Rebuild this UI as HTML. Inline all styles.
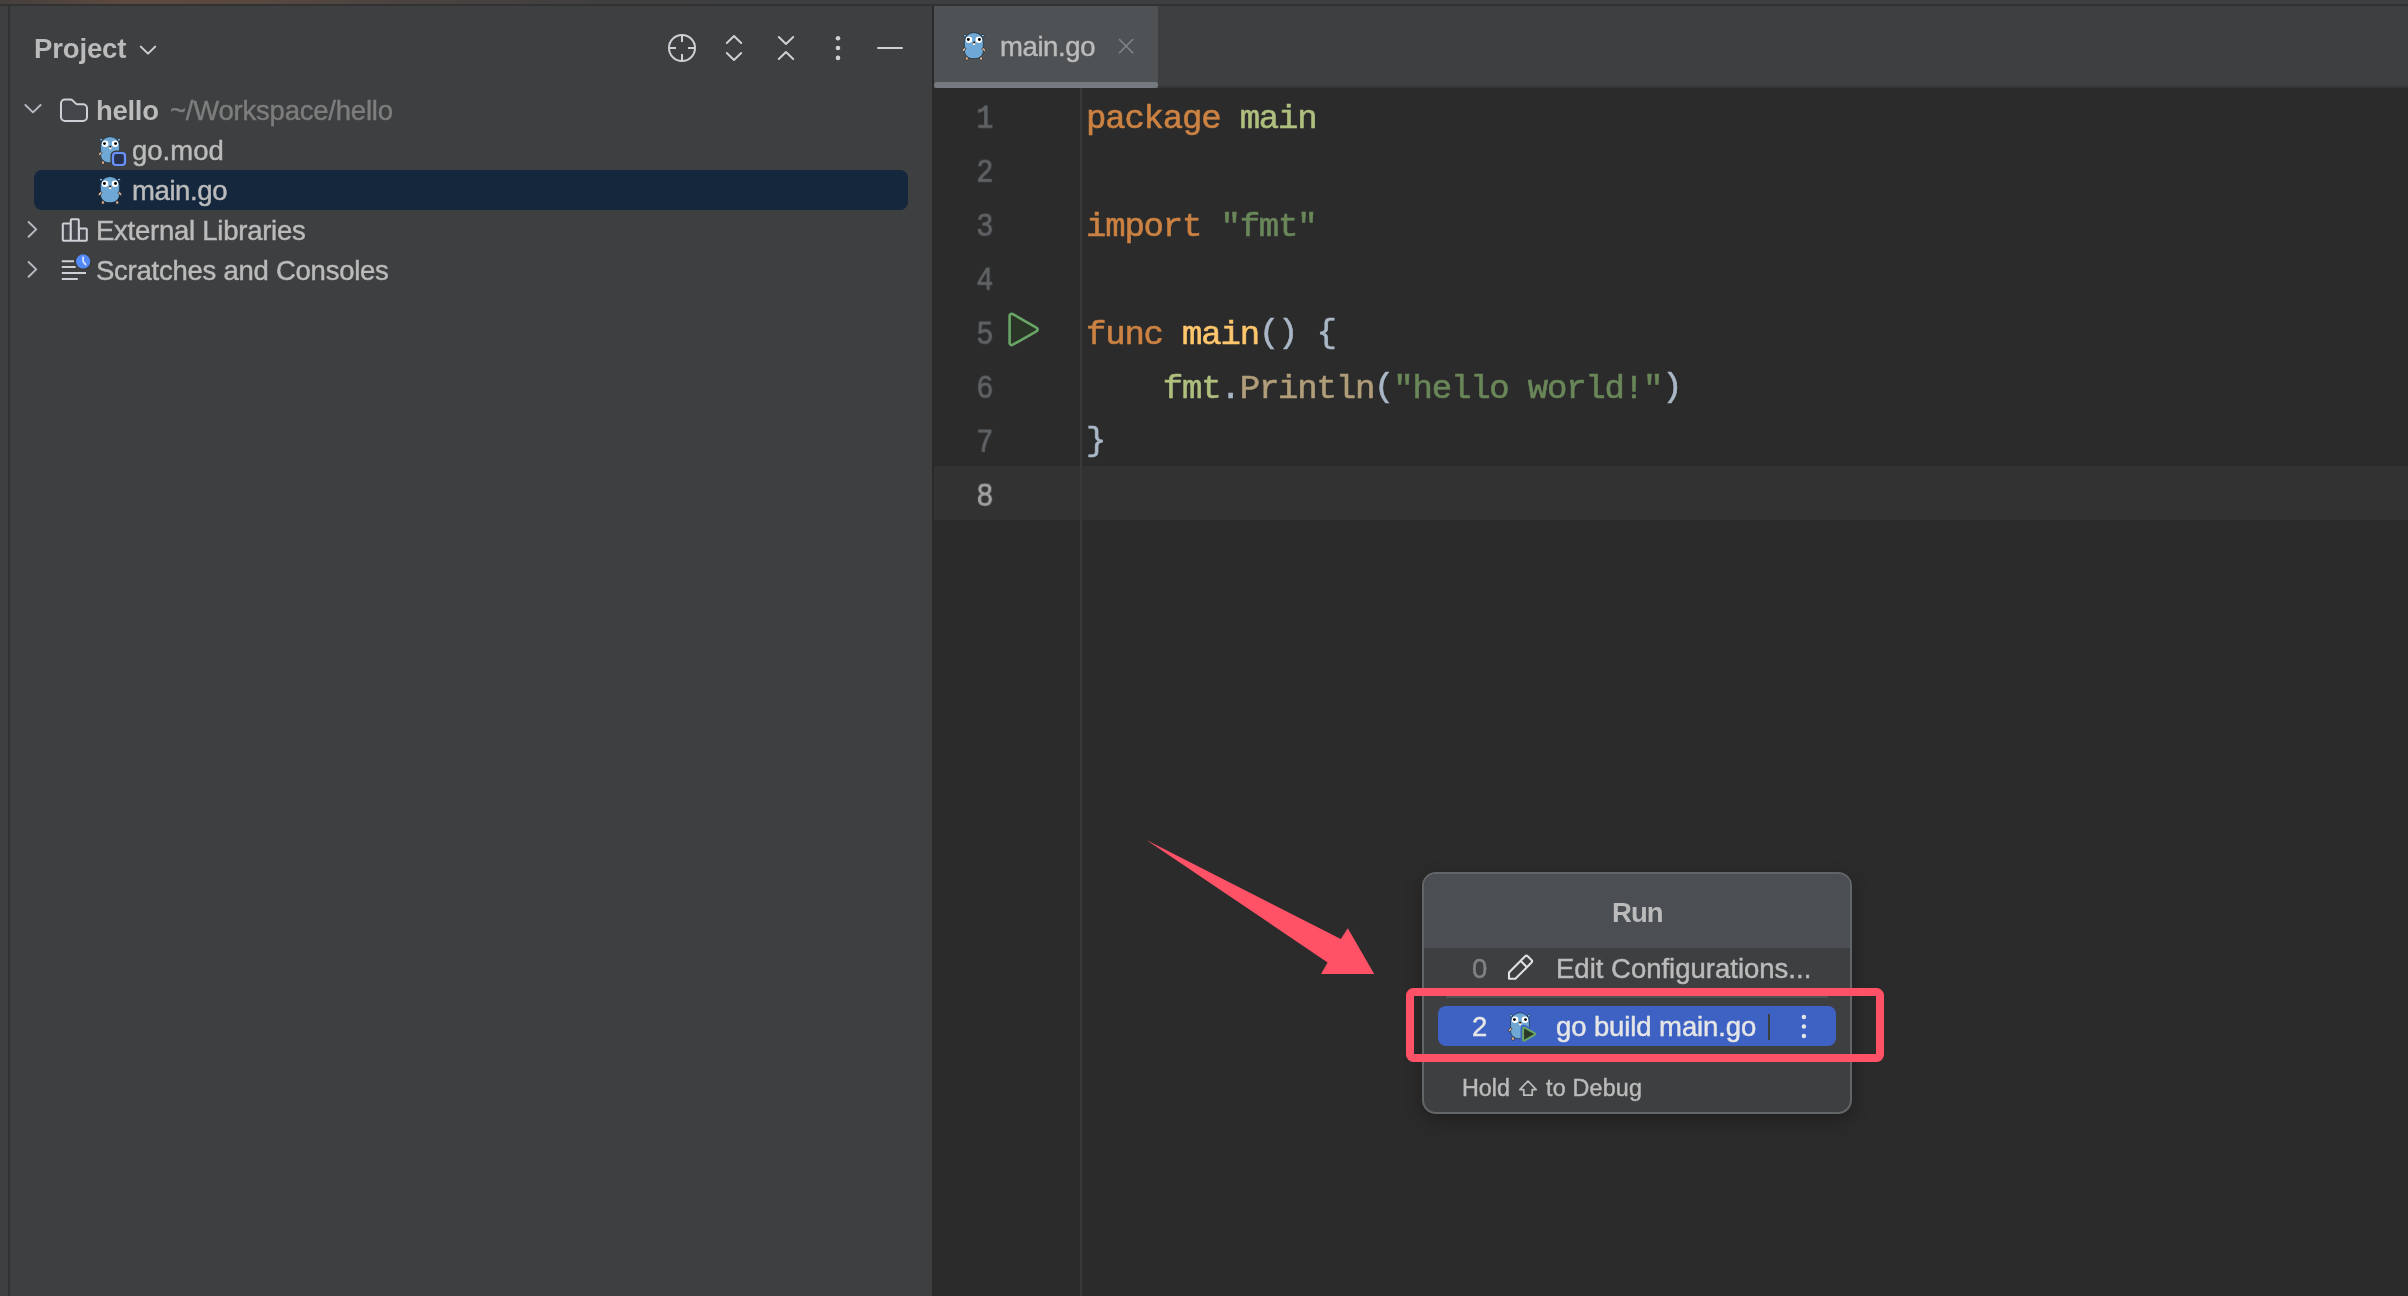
<!DOCTYPE html>
<html>
<head>
<meta charset="utf-8">
<title>GoLand</title>
<style>
*{box-sizing:border-box;margin:0;padding:0}
html,body{width:2408px;height:1296px;overflow:hidden;background:#2b2b2b}
body{position:relative;font-family:"Liberation Sans",sans-serif;color:#bbbbbb}
.abs{position:absolute}
.t{position:absolute;will-change:transform;white-space:pre;line-height:1;font-size:27.5px;color:#bbbbbb}
.t{-webkit-text-stroke:0.45px currentColor}
.b{font-weight:bold;-webkit-text-stroke:0}
.mono{font-family:"Liberation Mono",monospace}
svg{position:absolute;overflow:visible}
/* backgrounds */
#topstrip{left:0;top:0;width:2408px;height:4px;background:linear-gradient(90deg,#453f3d 0px,#5e4a40 130px,#584840 260px,#4a4341 420px,#403f40 600px,#3d3f41 800px,#3d3f41 2408px)}
#hline{left:0;top:4px;width:2408px;height:2px;background:#323232}
#leftstrip{left:0;top:6px;width:8px;height:1290px;background:#3d3f41}
#vline1{left:8px;top:6px;width:2px;height:1290px;background:#323232}
#panel{left:10px;top:6px;width:922px;height:1290px;background:#3d3f41}
#vline2{left:932px;top:6px;width:2px;height:1290px;background:#2a2a2a}
#tabbar{left:934px;top:6px;width:1474px;height:80px;background:#3d3f41}
#tabline{left:934px;top:86px;width:1474px;height:2px;background:#353535}
#tab{left:934px;top:6px;width:224px;height:82px;background:#4e5254}
#tabul{left:934px;top:82px;width:224px;height:6px;background:#747a80;border-radius:3px}
#caretrow{left:934px;top:466px;width:1474px;height:54px;background:#323232}
#gutline{left:1080px;top:88px;width:2px;height:1208px;background:#393939}
#sel{left:34px;top:170px;width:874px;height:40px;background:#15273c;border-radius:8px}
/* code */
.ln{position:absolute;will-change:transform;left:934px;width:60.5px;text-align:right;font-family:"Liberation Mono",monospace;font-size:32px;line-height:54px;height:54px;color:#606366;transform:translateY(1px) scale(0.9,1.04);transform-origin:50.9px 60%;-webkit-text-stroke:0.7px currentColor}
.cl{position:absolute;will-change:transform;left:1085.5px;-webkit-text-stroke:0.6px currentColor;font-family:"Liberation Mono",monospace;font-size:34px;line-height:54px;height:54px;white-space:pre;letter-spacing:-1.2px;color:#a9b7c6}
.pn{position:relative;top:-2px}.kw{color:#cc8242}.pk{color:#afbf7e}.st{color:#6a8759}.fn{color:#ffc66d}.fc{color:#b09d79}
</style>
</head>
<body>
<div class="abs" id="topstrip"></div>
<div class="abs" id="hline"></div>
<div class="abs" id="leftstrip"></div>
<div class="abs" id="vline1"></div>
<div class="abs" id="panel"></div>
<div class="abs" id="vline2"></div>
<div class="abs" id="tabbar"></div>
<div class="abs" id="tabline"></div>
<div class="abs" id="tab"></div>
<div class="abs" id="tabul"></div>
<div class="abs" id="caretrow"></div>
<div class="abs" id="gutline"></div>
<div class="abs" id="sel"></div>

<!-- PROJECT HEADER -->
<div class="t b" id="tProject" style="left:34px;top:35px;font-size:27.5px;letter-spacing:-0.15px">Project</div>

<!-- TREE -->
<div class="t b" id="tHello" style="left:96px;top:96.5px;letter-spacing:-0.3px">hello</div>
<div class="t" id="tPath" style="left:170px;top:96.5px;color:#7d7d7d;letter-spacing:-0.22px">~/Workspace/hello</div>
<div class="t" id="tGomod" style="left:132px;top:136.5px">go.mod</div>
<div class="t" id="tMaingo" style="left:132px;top:176.5px;letter-spacing:-0.4px">main.go</div>
<div class="t" id="tExt" style="left:95.8px;top:216.5px;letter-spacing:-0.25px">External Libraries</div>
<div class="t" id="tScr" style="left:96px;top:256.5px;letter-spacing:-0.25px">Scratches and Consoles</div>

<!-- TAB -->
<div class="t" id="tTab" style="left:1000px;top:33px;letter-spacing:-0.4px">main.go</div>

<!-- CODE -->
<div class="ln" style="top:92px">1</div>
<div class="ln" style="top:146px">2</div>
<div class="ln" style="top:200px">3</div>
<div class="ln" style="top:254px">4</div>
<div class="ln" style="top:308px">5</div>
<div class="ln" style="top:362px">6</div>
<div class="ln" style="top:416px">7</div>
<div class="ln" style="top:470px;color:#a4a3a3">8</div>

<div class="cl" style="top:92px"><span class="kw">package</span> <span class="pk">main</span></div>
<div class="cl" style="top:200px"><span class="kw">import</span> <span class="st">"fmt"</span></div>
<div class="cl" style="top:308px"><span class="kw">func</span> <span class="fn">main</span><span class="pn">()</span> <span class="pn">{</span></div>
<div class="cl" style="top:362px">    <span class="pk">fmt</span>.<span class="fc">Println</span><span class="pn">(</span><span class="st">"hello world!"</span><span class="pn">)</span></div>
<div class="cl" style="top:416px"><span class="pn">}</span></div>

<!-- POPUP -->
<div class="abs" id="popup" style="left:1422px;top:872px;width:430px;height:242px;border:2px solid #636668;border-radius:14px;background:#3d3f41;overflow:hidden;box-shadow:0 6px 18px rgba(0,0,0,0.28)">
  <div class="abs" id="pophead" style="left:0;top:0;width:426px;height:74px;background:#4b4e53"></div>
</div>
<div class="abs" id="popsep" style="left:1446px;top:996px;width:382px;height:2px;background:#505357"></div>
<div class="abs" id="bluerow" style="left:1438px;top:1006px;width:398px;height:40px;border-radius:8px;background:#3d62c4"></div>
<div class="abs" id="rowsep" style="left:1768px;top:1014px;width:2px;height:26px;background:#3c3f41"></div>
<div class="t b" id="tRun" style="left:1612px;top:899px;letter-spacing:-0.9px">Run</div>
<div class="t" id="tZero" style="left:1472px;top:955px;color:#808285">0</div>
<div class="t" id="tEdit" style="left:1555.5px;top:955px">Edit Configurations...</div>
<div class="t" id="tTwo" style="left:1472px;top:1013px;color:#e6e6e6">2</div>
<div class="t" id="tBuild" style="left:1556px;top:1013px;color:#e6e6e6;letter-spacing:-0.1px">go build main.go</div>
<div class="t" id="tHold" style="left:1462px;top:1077.3px;font-size:23.3px">Hold</div>
<div class="t" id="tDebug" style="left:1545.8px;top:1077.3px;font-size:23.3px;letter-spacing:0.2px">to Debug</div>
<div class="abs" id="redrect" style="left:1406px;top:988px;width:478px;height:74px;border:8px solid #ff5266;border-radius:7.5px"></div>

<!-- ICON LAYER -->
<svg id="icons" width="2408" height="1296" viewBox="0 0 2408 1296" style="left:0;top:0" fill="none">
<defs>
<symbol id="gopher" viewBox="0 0 34 36" overflow="visible">
  <g stroke="#0f1b28" stroke-opacity="0.8" stroke-width="0.7">
    <ellipse cx="7.1" cy="7.6" rx="1.6" ry="1.05" fill="#8fc4ea" transform="rotate(22 7.1 7.6)"/>
    <ellipse cx="24.9" cy="7.6" rx="1.6" ry="1.05" fill="#8fc4ea" transform="rotate(-22 24.9 7.6)"/>
    <path d="M6.5 14.2C6.5 8.9 10.7 4.7 15.95 4.7C21.2 4.7 25.4 8.9 25.4 14.2L25.4 22.6C25.4 27 21.9 30.6 17.4 30.6L14.5 30.6C10 30.6 6.5 27 6.5 22.6Z" fill="#6fa8d4"/>
    <ellipse cx="6.1" cy="21.6" rx="2.3" ry="1.15" fill="#eabf9e" transform="rotate(-45 6.1 21.6)"/>
    <ellipse cx="25.9" cy="21.6" rx="2.3" ry="1.15" fill="#eabf9e" transform="rotate(45 25.9 21.6)"/>
    <ellipse cx="8.9" cy="30.5" rx="1.5" ry="1.7" fill="#e4b491" transform="rotate(-20 8.9 30.5)"/>
    <ellipse cx="23.2" cy="30.5" rx="1.5" ry="1.7" fill="#e4b491" transform="rotate(20 23.2 30.5)"/>
  </g>
  <circle cx="11.1" cy="11.7" r="3.25" fill="#fff"/>
  <circle cx="20.9" cy="11.7" r="3.25" fill="#fff"/>
  <circle cx="10.4" cy="11.5" r="1.45" fill="#000"/>
  <circle cx="21.5" cy="11.5" r="1.45" fill="#000"/>
  <ellipse cx="16.2" cy="15.2" rx="1.5" ry="1" fill="#e3b08d"/>
  <ellipse cx="16.2" cy="14.3" rx="1" ry="0.75" fill="#000"/>
  <rect x="15.2" y="15.9" width="2" height="1.2" fill="#fff"/>
</symbol>
</defs>

<!-- Project header chevron -->
<path d="M140.8 46.6L148 53.6L155.2 46.6" stroke="#ced0d6" stroke-width="2" stroke-linecap="round" stroke-linejoin="round"/>

<!-- toolbar: locate -->
<g stroke="#ced0d6" stroke-width="2" stroke-linecap="butt">
  <circle cx="682" cy="48" r="13"/>
  <path d="M682 35V42M682 54V61M669 48H676M688 48H695"/>
</g>
<!-- expand all -->
<g stroke="#ced0d6" stroke-width="2" stroke-linecap="round" stroke-linejoin="round">
  <path d="M726.8 43L734 36L741.2 43"/>
  <path d="M726.8 53L734 60L741.2 53"/>
  <!-- collapse all -->
  <path d="M778.8 37L786 44L793.2 37"/>
  <path d="M778.8 59L786 52L793.2 59"/>
  <!-- minimize -->
  <path d="M878 48H902"/>
</g>
<!-- more dots -->
<g fill="#ced0d6">
  <circle cx="838" cy="38.2" r="2.3"/><circle cx="838" cy="48" r="2.3"/><circle cx="838" cy="57.9" r="2.3"/>
</g>

<!-- tree chevrons -->
<g stroke="#b4b8bf" stroke-width="2" stroke-linecap="round" stroke-linejoin="round">
  <path d="M25.4 105L33 112.4L40.6 105"/>
  <path d="M28.6 222L36.2 229.4L28.6 236.8"/>
  <path d="M28.6 262L36.2 269.4L28.6 276.8"/>
</g>

<!-- folder -->
<path d="M61 103.5C61 101.3 62.8 99.5 65 99.5H70.2C71.2 99.5 72.1 99.9 72.8 100.6L75.6 103.4C76.2 104 76.9 104.3 77.7 104.3H83C85.2 104.3 87 106.1 87 108.3V117C87 119.2 85.2 121 83 121H65C62.8 121 61 119.2 61 117Z" fill="#43454a" stroke="#ced0d6" stroke-width="2" stroke-linejoin="round"/>

<!-- external libraries -->
<g fill="#43454a" stroke="#ced0d6" stroke-width="2" stroke-linejoin="round">
  <rect x="62.8" y="223.6" width="8" height="17.2" rx="0.8"/>
  <rect x="78.8" y="228.4" width="8" height="12.4" rx="0.8"/>
  <rect x="70.8" y="219.3" width="8" height="21.5" rx="0.8"/>
</g>

<!-- scratches -->
<g stroke="#ced0d6" stroke-width="2">
  <path d="M61.8 261.2H74M61.8 267.1H75.6M61.8 273.1H86M61.8 279.1H77.8"/>
</g>
<circle cx="83.1" cy="261.4" r="8.6" fill="#3c3f41"/>
<circle cx="83.1" cy="261.4" r="7.1" fill="#548af7"/>
<path d="M83.1 257.2V261.6L85.6 264.6" stroke="#e6ecff" stroke-width="1.6" stroke-linecap="round" stroke-linejoin="round"/>

<!-- gophers -->
<use href="#gopher" x="94" y="172" width="34" height="36"/>
<use href="#gopher" x="94.1" y="132.1" width="34" height="36"/>
<use href="#gopher" x="957.9" y="28" width="34" height="36"/>
<!-- go.mod badge -->
<rect x="110.4" y="150.4" width="17.2" height="17.2" rx="5.2" fill="#3c3f41"/>
<rect x="113" y="153" width="12" height="12" rx="3" fill="#283250" stroke="#6a92ff" stroke-width="2.2"/>

<!-- tab close -->
<path d="M1119.5 39.5L1132.7 52.7M1132.7 39.5L1119.5 52.7" stroke="#80858b" stroke-width="1.6" stroke-linecap="round"/>

<!-- red arrow -->
<path d="M1146.4 840.1L1340.8 939L1347.8 928.3L1374.2 973.9L1321 973.9L1327.6 962.4Z" fill="#ff5266"/>

<!-- popup: pencil -->
<g stroke="#dfe1e5" stroke-width="2.1" stroke-linejoin="round" stroke-linecap="round">
  <path d="M1509 978.8V972.5L1525.2 956.3C1525.9 955.6 1527 955.6 1527.7 956.3L1531.5 960.1C1532.2 960.8 1532.2 961.9 1531.5 962.6L1515.4 978.8Z"/>
  <path d="M1521 961.3L1526.5 966.8"/>
</g>
<!-- popup: gopher with run badge -->
<use href="#gopher" x="1504" y="1008.1" width="34" height="36"/>
<path d="M1524.1 1028.4L1534 1034.05L1524.1 1039.7Z" fill="#3d62c4" stroke="#3d62c4" stroke-width="7.2" stroke-linejoin="round"/>
<path d="M1524.1 1028.4L1534 1034.05L1524.1 1039.7Z" fill="#69a566" stroke="#69a566" stroke-width="4" stroke-linejoin="round"/>
<path d="M1524.1 1028.4L1534 1034.05L1524.1 1039.7Z" fill="#2b3727"/>
<!-- popup: more dots -->
<g fill="#e6e6e6">
  <circle cx="1803.9" cy="1017" r="2.2"/><circle cx="1803.9" cy="1026.5" r="2.2"/><circle cx="1803.9" cy="1036" r="2.2"/>
</g>
<!-- popup: shift arrow -->
<path d="M1528 1081L1536.2 1089.6H1532.2V1095.2H1523.8V1089.6H1519.8Z" stroke="#bbbbbb" stroke-width="1.7" stroke-linejoin="round"/>

<!-- gutter run -->
<path d="M1011.8 316.1L1035.3 329.45L1011.8 342.8Z" fill="#69a566" stroke="#69a566" stroke-width="7" stroke-linejoin="round"/>
<path d="M1011.8 316.1L1035.3 329.45L1011.8 342.8Z" fill="#2a3528" stroke="#2a3528" stroke-width="1.8" stroke-linejoin="round"/>
</svg>

</body>
</html>
